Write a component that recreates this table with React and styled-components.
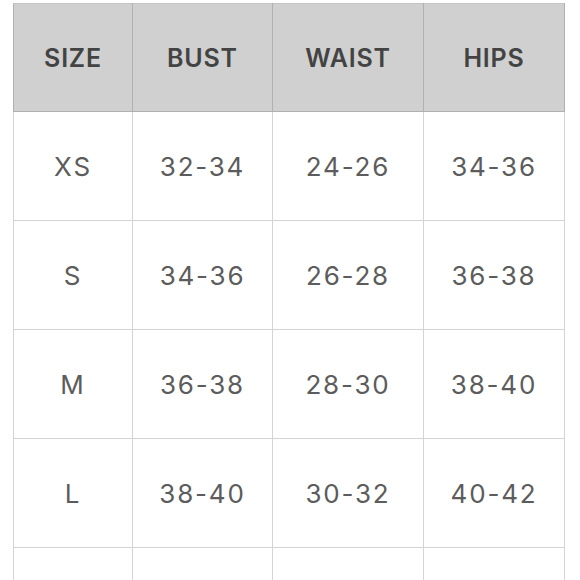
import React from 'react'
import styled, { createGlobalStyle } from 'styled-components'

const rows = [
  ['XS', '32-34', '24-26', '34-36'],
  ['S', '34-36', '26-28', '36-38'],
  ['M', '36-38', '28-30', '38-40'],
  ['L', '38-40', '30-32', '40-42'],
  ['', '', '', ''],
]

const widths = [119, 140, 151, 141]

function App() {
  return (
    <>
      <Global />
      <Page>
        <Chart>
          <colgroup>
            {widths.map((w, i) => <col key={i} style={{ width: w }} />)}
          </colgroup>
          <thead>
            <tr>
              <Head>SIZE</Head>
              <Head>BUST</Head>
              <Head>WAIST</Head>
              <Head>HIPS</Head>
            </tr>
          </thead>
          <tbody>
            {rows.map((r, n) => (
              <tr key={n}>
                {r.map((c, i) => <Cell key={i}>{c}</Cell>)}
              </tr>
            ))}
          </tbody>
        </Chart>
      </Page>
    </>
  )
}

const Global = createGlobalStyle`
body{
  margin:0;
  background:#fff;
  font-family:Inter, "Open Sans", sans-serif;
}
`;
const Page = styled.div`
width:580px;
height:580px;
overflow:hidden;
padding:3px 0 0 13px;
box-sizing:border-box;
`;
const Chart = styled.table`
border-collapse:collapse;
table-layout:fixed;
width:552px;
`;
const Head = styled.th`
height:107px;
padding:0;
background:#d0d0d0;
border:1px solid #b0b0b0;
border-top-color:#c4c4c4;
color:#434343;
font-size:25px;
font-weight:600;
letter-spacing:0.8px;
text-align:center;
vertical-align:middle;
`;
const Cell = styled.td`
height:108px;
padding:0;
border:1px solid #d4d4d4;
color:#5c5c5c;
font-size:26px;
font-weight:400;
letter-spacing:1.8px;
text-align:center;
vertical-align:middle;
`;

export default App
